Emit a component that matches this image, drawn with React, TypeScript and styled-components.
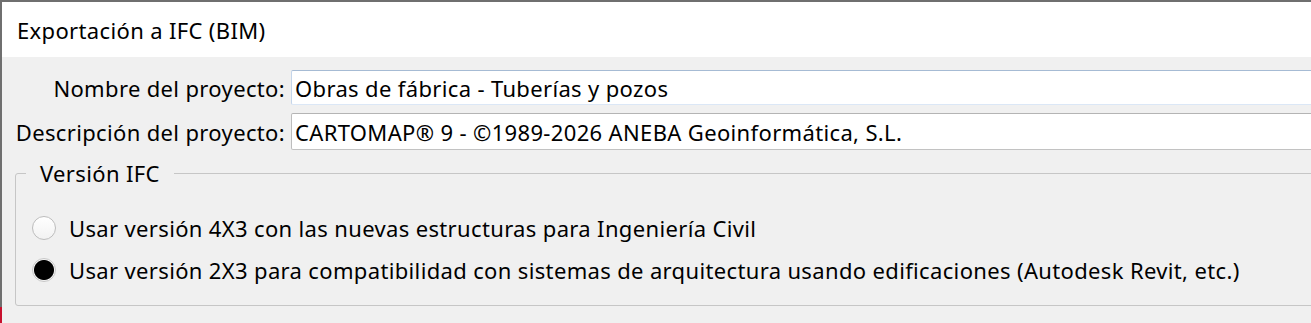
import React from "react";
import styled, { createGlobalStyle } from "styled-components";

const Global = createGlobalStyle`
  html, body { margin: 0; padding: 0; background: #f0f0f0; overflow: hidden; }
  body {
    font-family: "Noto Sans", "Open Sans", sans-serif;
    font-size: 22px;
    letter-spacing: 0.35px;
    color: #000;
  }
`;

const Frame = styled.div`
  width: 1311px;
  height: 323px;
  box-sizing: border-box;
  padding: 2px 0 0 2px;
  background: linear-gradient(to bottom, #6f6f6f 0, #6f6f6f 307px, #c8102e 307px, #c8102e 100%);
  overflow: hidden;
`;

const Window = styled.div`
  height: 100%;
  background: #f0f0f0;
  overflow: hidden;
`;

const TitleBar = styled.div`
  height: 55px;
  background: #ffffff;
  display: flex;
  align-items: center;
  padding: 1px 0 0 15px;
  box-sizing: border-box;
  line-height: 30px;
`;

const Body = styled.div`
  padding: 13px 0 0 13px;
  display: flex;
  flex-direction: column;
`;

const Form = styled.div`
  display: grid;
  grid-template-columns: 270px 1fr;
  column-gap: 6px;
  row-gap: 8px;
  align-items: center;
  margin-right: -20px;
`;

const Label = styled.label`
  text-align: right;
  white-space: nowrap;
  line-height: 30px;
`;

const Field = styled.div<{ $hover?: boolean; $tall?: boolean }>`
  height: ${(p) => (p.$tall ? 37 : 35)}px;
  box-sizing: border-box;
  background: #fff;
  border: 1px solid ${(p) => (p.$hover ? "#c4d5ea" : "#bdbdbd")};
  border-top-color: ${(p) => (p.$hover ? "#a6bbd4" : "#b4b4b4")};
  border-bottom-color: ${(p) => (p.$hover ? "#dbe7f6" : "#c2c2c2")};
  border-radius: 2px;
  display: flex;
  align-items: center;
  padding-left: 3px;
  white-space: nowrap;
  line-height: 30px;
`;

const Group = styled.fieldset`
  margin: 8px -20px 0 0;
  padding: 0 0 20px 16px;
  border: 1px solid #c6c6c6;
  border-radius: 3px;
  min-width: 0;
`;

const Legend = styled.legend`
  margin-left: -6px;
  padding: 0 14px;
  line-height: 30px;
`;

const RadioList = styled.div`
  display: flex;
  flex-direction: column;
  gap: 12px;
  padding-top: 25px;
`;

const RadioRow = styled.label`
  display: flex;
  align-items: center;
  gap: 13px;
  height: 30px;
  white-space: nowrap;
`;

const Dot = styled.span<{ $checked?: boolean }>`
  width: 24px;
  height: 24px;
  box-sizing: border-box;
  border-radius: 50%;
  flex: none;
  border: 1px solid ${(p) => (p.$checked ? "#c8c8c8" : "#bdbdbd")};
  background: ${(p) =>
    p.$checked
      ? "radial-gradient(circle, #000 0, #000 9.5px, #f4f4f4 10.5px)"
      : "linear-gradient(#ffffff, #f2f2f2)"};
`;

export default function App() {
  return (
    <>
      <Global />
      <Frame>
        <Window>
          <TitleBar>Exportación a IFC (BIM)</TitleBar>
          <Body>
            <Form>
              <Label>Nombre del proyecto:</Label>
              <Field $hover>Obras de fábrica - Tuberías y pozos</Field>
              <Label>Descripción del proyecto:</Label>
              <Field $tall>CARTOMAP® 9 - ©1989-2026 ANEBA Geoinformática, S.L.</Field>
            </Form>
            <Group>
              <Legend>Versión IFC</Legend>
              <RadioList>
                <RadioRow>
                  <Dot />
                  Usar versión 4X3 con las nuevas estructuras para Ingeniería Civil
                </RadioRow>
                <RadioRow>
                  <Dot $checked />
                  Usar versión 2X3 para compatibilidad con sistemas de arquitectura usando edificaciones (Autodesk Revit, etc.)
                </RadioRow>
              </RadioList>
            </Group>
          </Body>
        </Window>
      </Frame>
    </>
  );
}
